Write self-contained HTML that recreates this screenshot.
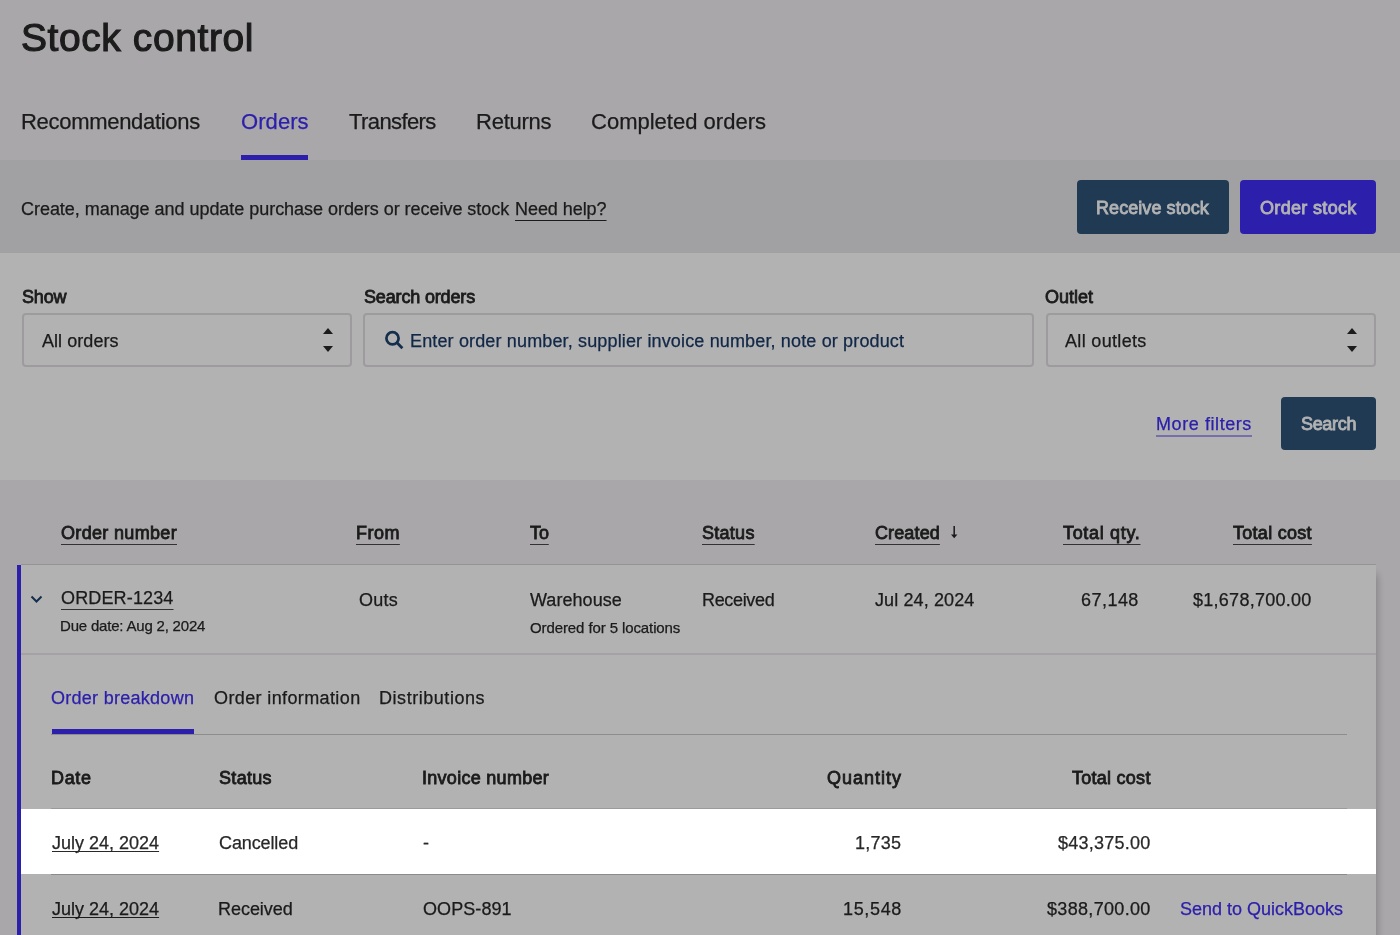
<!DOCTYPE html>
<html><head><meta charset="utf-8"><title>Stock control</title>
<style>
html,body{margin:0;padding:0}
body{width:1400px;height:935px;overflow:hidden;position:relative;background:#f3f0f4;font-family:"Liberation Sans",sans-serif;color:#282828}
.b{position:absolute}
.t{position:absolute;white-space:nowrap;text-decoration-skip-ink:none;will-change:transform}
.box{position:absolute;box-sizing:border-box;border:2px solid #e2dfe3;border-radius:4px;background:#fff}
.btn{position:absolute;border-radius:4px}
.up{position:absolute;width:0;height:0;border-left:5px solid transparent;border-right:5px solid transparent;border-bottom:6px solid #282828}
.dn{position:absolute;width:0;height:0;border-left:5px solid transparent;border-right:5px solid transparent;border-top:6px solid #282828}
#ov{position:absolute;left:0;top:0;width:1400px;height:935px;background:rgba(0,0,0,0.3);z-index:100}
#hl{position:absolute;left:21px;top:809px;width:1355px;height:65px;background:#fff;z-index:200}
#hlt{position:absolute;left:0;top:0;width:1400px;height:0;z-index:201}
</style></head><body>
<!-- banner -->
<div class="b" style="left:0;top:160px;width:1400px;height:93px;background:#e7e5e9"></div>
<!-- filters -->
<div class="b" style="left:0;top:253px;width:1400px;height:227px;background:#fff"></div>
<!-- orders tab underline -->
<div class="b" style="left:241px;top:155px;width:67px;height:5px;background:#3f2df5"></div>
<!-- buttons -->
<div class="btn" style="left:1077px;top:180px;width:152px;height:54px;background:#2e5379"></div>
<div class="btn" style="left:1240px;top:180px;width:136px;height:54px;background:#3f2df5"></div>
<!-- inputs -->
<div class="box" style="left:22px;top:313px;width:330px;height:54px"></div>
<div class="box" style="left:363px;top:313px;width:671px;height:54px"></div>
<div class="box" style="left:1046px;top:313px;width:330px;height:54px"></div>
<div class="up" style="left:323px;top:328px"></div>
<div class="dn" style="left:323px;top:346px"></div>
<div class="up" style="left:1347px;top:328px"></div>
<div class="dn" style="left:1347px;top:346px"></div>
<svg class="b" style="left:380px;top:326px" width="28" height="28" viewBox="380 326 28 28">
<circle cx="392.5" cy="338.3" r="6.1" fill="none" stroke="#1d426e" stroke-width="2.7"/>
<line x1="396.8" y1="342.6" x2="402.4" y2="348.2" stroke="#1d426e" stroke-width="2.8"/>
</svg>
<div class="btn" style="left:1281px;top:397px;width:95px;height:53px;background:#2e5379"></div>
<!-- panel -->
<div class="b" style="left:21px;top:564px;width:1355px;height:400px;background:#fff;border-top:1px solid #d4d4d4;box-shadow:3px 8px 8px -2px rgba(0,0,0,0.25)"></div>
<div class="b" style="left:17px;top:565px;width:4px;height:400px;background:#3f2df5"></div>
<svg class="b" style="left:28px;top:590px" width="18" height="18" viewBox="28 590 18 18">
<polyline points="31.5,596.5 36.5,601.5 41.5,596.5" fill="none" stroke="#1d426e" stroke-width="2"/>
</svg>
<svg class="b" style="left:948px;top:522px" width="14" height="20" viewBox="948 522 14 20">
<line x1="954.2" y1="526" x2="954.2" y2="536" stroke="#333" stroke-width="1.6"/>
<polygon points="951,534.5 957.4,534.5 954.2,538.2" fill="#282828"/>
</svg>
<div class="b" style="left:21px;top:653px;width:1355px;height:2px;background:#ebe8ed"></div>
<div class="b" style="left:51px;top:734px;width:1296px;height:1px;background:#cbcbcb"></div>
<div class="b" style="left:52px;top:729px;width:142px;height:5px;background:#3f2df5"></div>
<div class="b" style="left:51px;top:808px;width:1296px;height:1px;background:#dedede"></div>
<div class="b" style="left:51px;top:874px;width:1296px;height:1px;background:#c8c8cc"></div>
<span class="t" id="t0" style="top:18px;font-size:39px;line-height:39px;-webkit-text-stroke-width:1.1px;letter-spacing:0.583px;left:21px;">Stock control</span>
<span class="t" id="t1" style="top:111px;font-size:22px;line-height:22px;-webkit-text-stroke-width:0.25px;letter-spacing:-0.302px;left:21px;">Recommendations</span>
<span class="t" id="t2" style="top:111px;font-size:22px;line-height:22px;-webkit-text-stroke-width:0.25px;color:#3f2df5;letter-spacing:0.073px;left:241px;">Orders</span>
<span class="t" id="t3" style="top:111px;font-size:22px;line-height:22px;-webkit-text-stroke-width:0.25px;letter-spacing:-0.599px;left:349px;">Transfers</span>
<span class="t" id="t4" style="top:111px;font-size:22px;line-height:22px;-webkit-text-stroke-width:0.25px;letter-spacing:-0.239px;left:476px;">Returns</span>
<span class="t" id="t5" style="top:111px;font-size:22px;line-height:22px;-webkit-text-stroke-width:0.25px;letter-spacing:0.009px;left:591px;">Completed orders</span>
<span class="t" id="t6" style="top:200px;font-size:18px;line-height:18px;-webkit-text-stroke-width:0.25px;letter-spacing:-0.036px;left:21px;">Create, manage and update purchase orders or receive stock</span>
<span class="t" id="t7" style="top:200px;font-size:18px;line-height:18px;-webkit-text-stroke-width:0.25px;letter-spacing:-0.057px;left:515px;text-decoration:underline;text-underline-offset:5px;text-decoration-thickness:1px;">Need help?</span>
<span class="t" id="t8" style="top:199px;font-size:18px;line-height:18px;-webkit-text-stroke-width:0.8px;color:#fff;letter-spacing:0.067px;left:1096px;">Receive stock</span>
<span class="t" id="t9" style="top:199px;font-size:18px;line-height:18px;-webkit-text-stroke-width:0.8px;color:#fff;letter-spacing:0.335px;left:1260px;">Order stock</span>
<span class="t" id="t10" style="top:288px;font-size:18px;line-height:18px;-webkit-text-stroke-width:0.8px;letter-spacing:-0.177px;left:22px;">Show</span>
<span class="t" id="t11" style="top:288px;font-size:18px;line-height:18px;-webkit-text-stroke-width:0.8px;letter-spacing:-0.158px;left:364px;">Search orders</span>
<span class="t" id="t12" style="top:288px;font-size:18px;line-height:18px;-webkit-text-stroke-width:0.8px;left:1045px;">Outlet</span>
<span class="t" id="t13" style="top:332px;font-size:18px;line-height:18px;-webkit-text-stroke-width:0.25px;letter-spacing:0.056px;left:42px;">All orders</span>
<span class="t" id="t14" style="top:332px;font-size:18px;line-height:18px;-webkit-text-stroke-width:0.25px;color:#1b3a66;letter-spacing:0.148px;left:410px;">Enter order number, supplier invoice number, note or product</span>
<span class="t" id="t15" style="top:332px;font-size:18px;line-height:18px;-webkit-text-stroke-width:0.25px;letter-spacing:0.325px;left:1065px;">All outlets</span>
<span class="t" id="t16" style="top:415px;font-size:18px;line-height:18px;-webkit-text-stroke-width:0.25px;color:#3f2df5;letter-spacing:0.578px;left:1156px;text-decoration:underline;text-underline-offset:5px;text-decoration-thickness:2px;text-decoration-color:rgba(63,45,245,0.45);">More filters</span>
<span class="t" id="t17" style="top:415px;font-size:18px;line-height:18px;-webkit-text-stroke-width:0.8px;color:#fff;letter-spacing:-0.329px;left:1301px;">Search</span>
<span class="t" id="t18" style="top:524px;font-size:18px;line-height:18px;-webkit-text-stroke-width:0.8px;letter-spacing:0.328px;left:61px;text-decoration:underline;text-underline-offset:5px;text-decoration-thickness:1px;text-decoration-color:#484848;">Order number</span>
<span class="t" id="t19" style="top:524px;font-size:18px;line-height:18px;-webkit-text-stroke-width:0.8px;letter-spacing:0.461px;left:356px;text-decoration:underline;text-underline-offset:5px;text-decoration-thickness:1px;text-decoration-color:#484848;">From</span>
<span class="t" id="t20" style="top:524px;font-size:18px;line-height:18px;-webkit-text-stroke-width:0.8px;letter-spacing:-0.116px;left:530px;text-decoration:underline;text-underline-offset:5px;text-decoration-thickness:1px;text-decoration-color:#484848;">To</span>
<span class="t" id="t21" style="top:524px;font-size:18px;line-height:18px;-webkit-text-stroke-width:0.8px;letter-spacing:0.274px;left:702px;text-decoration:underline;text-underline-offset:5px;text-decoration-thickness:1px;text-decoration-color:#484848;">Status</span>
<span class="t" id="t22" style="top:524px;font-size:18px;line-height:18px;-webkit-text-stroke-width:0.8px;letter-spacing:0.123px;left:875px;text-decoration:underline;text-underline-offset:5px;text-decoration-thickness:1px;text-decoration-color:#484848;">Created</span>
<span class="t" id="t23" style="top:524px;font-size:18px;line-height:18px;-webkit-text-stroke-width:0.8px;letter-spacing:0.676px;right:260px;text-decoration:underline;text-underline-offset:5px;text-decoration-thickness:1px;text-decoration-color:#484848;">Total qty.</span>
<span class="t" id="t24" style="top:524px;font-size:18px;line-height:18px;-webkit-text-stroke-width:0.8px;letter-spacing:0.284px;right:88px;text-decoration:underline;text-underline-offset:5px;text-decoration-thickness:1px;text-decoration-color:#484848;">Total cost</span>
<span class="t" id="t25" style="top:589px;font-size:18px;line-height:18px;-webkit-text-stroke-width:0.25px;letter-spacing:0.149px;left:61px;text-decoration:underline;text-underline-offset:5px;text-decoration-thickness:1px;text-decoration-color:#484848;">ORDER-1234</span>
<span class="t" id="t26" style="top:618px;font-size:15px;line-height:15px;-webkit-text-stroke-width:0.25px;letter-spacing:-0.196px;left:60px;">Due date: Aug 2, 2024</span>
<span class="t" id="t27" style="top:591px;font-size:18px;line-height:18px;-webkit-text-stroke-width:0.25px;letter-spacing:0.261px;left:359px;">Outs</span>
<span class="t" id="t28" style="top:591px;font-size:18px;line-height:18px;-webkit-text-stroke-width:0.25px;letter-spacing:0.049px;left:530px;">Warehouse</span>
<span class="t" id="t29" style="top:620px;font-size:15px;line-height:15px;-webkit-text-stroke-width:0.25px;letter-spacing:-0.101px;left:530px;">Ordered for 5 locations</span>
<span class="t" id="t30" style="top:591px;font-size:18px;line-height:18px;-webkit-text-stroke-width:0.25px;letter-spacing:-0.330px;left:702px;">Received</span>
<span class="t" id="t31" style="top:591px;font-size:18px;line-height:18px;-webkit-text-stroke-width:0.25px;letter-spacing:0.117px;left:875px;">Jul 24, 2024</span>
<span class="t" id="t32" style="top:591px;font-size:18px;line-height:18px;-webkit-text-stroke-width:0.25px;letter-spacing:0.464px;right:261px;">67,148</span>
<span class="t" id="t33" style="top:591px;font-size:18px;line-height:18px;-webkit-text-stroke-width:0.25px;letter-spacing:0.270px;right:88px;">$1,678,700.00</span>
<span class="t" id="t34" style="top:689px;font-size:18px;line-height:18px;-webkit-text-stroke-width:0.25px;color:#3f2df5;letter-spacing:0.277px;left:51px;">Order breakdown</span>
<span class="t" id="t35" style="top:689px;font-size:18px;line-height:18px;-webkit-text-stroke-width:0.25px;letter-spacing:0.381px;left:214px;">Order information</span>
<span class="t" id="t36" style="top:689px;font-size:18px;line-height:18px;-webkit-text-stroke-width:0.25px;letter-spacing:0.545px;left:379px;">Distributions</span>
<span class="t" id="t37" style="top:769px;font-size:18px;line-height:18px;-webkit-text-stroke-width:0.8px;letter-spacing:0.656px;left:51px;">Date</span>
<span class="t" id="t38" style="top:769px;font-size:18px;line-height:18px;-webkit-text-stroke-width:0.8px;letter-spacing:0.314px;left:219px;">Status</span>
<span class="t" id="t39" style="top:769px;font-size:18px;line-height:18px;-webkit-text-stroke-width:0.8px;letter-spacing:0.284px;left:422px;">Invoice number</span>
<span class="t" id="t40" style="top:769px;font-size:18px;line-height:18px;-webkit-text-stroke-width:0.8px;letter-spacing:0.993px;right:498px;">Quantity</span>
<span class="t" id="t41" style="top:769px;font-size:18px;line-height:18px;-webkit-text-stroke-width:0.8px;letter-spacing:0.261px;right:249px;">Total cost</span>
<span class="t" id="t47" style="top:900px;font-size:18px;line-height:18px;-webkit-text-stroke-width:0.25px;left:52px;text-decoration:underline;text-underline-offset:2px;text-decoration-thickness:1px;">July 24, 2024</span>
<span class="t" id="t48" style="top:900px;font-size:18px;line-height:18px;-webkit-text-stroke-width:0.25px;letter-spacing:-0.038px;left:218px;">Received</span>
<span class="t" id="t49" style="top:900px;font-size:18px;line-height:18px;-webkit-text-stroke-width:0.25px;letter-spacing:0.079px;left:423px;">OOPS-891</span>
<span class="t" id="t50" style="top:900px;font-size:18px;line-height:18px;-webkit-text-stroke-width:0.25px;letter-spacing:0.664px;right:498px;">15,548</span>
<span class="t" id="t51" style="top:900px;font-size:18px;line-height:18px;-webkit-text-stroke-width:0.25px;letter-spacing:0.326px;right:249px;">$388,700.00</span>
<span class="t" id="t52" style="top:900px;font-size:18px;line-height:18px;-webkit-text-stroke-width:0.25px;color:#3f2df5;letter-spacing:-0.006px;left:1180px;">Send to QuickBooks</span>
<div id="ov"></div>
<div id="hl"></div>
<div id="hlt">
<span class="t" id="t42" style="top:834px;font-size:18px;line-height:18px;-webkit-text-stroke-width:0.25px;left:52px;text-decoration:underline;text-underline-offset:2px;text-decoration-thickness:1px;">July 24, 2024</span>
<span class="t" id="t43" style="top:834px;font-size:18px;line-height:18px;-webkit-text-stroke-width:0.25px;letter-spacing:-0.110px;left:219px;">Cancelled</span>
<span class="t" id="t44" style="top:834px;font-size:18px;line-height:18px;-webkit-text-stroke-width:0.25px;left:423px;">-</span>
<span class="t" id="t45" style="top:834px;font-size:18px;line-height:18px;-webkit-text-stroke-width:0.25px;letter-spacing:0.250px;right:499px;">1,735</span>
<span class="t" id="t46" style="top:834px;font-size:18px;line-height:18px;-webkit-text-stroke-width:0.25px;letter-spacing:0.253px;right:249px;">$43,375.00</span>
</div>
</body></html>
